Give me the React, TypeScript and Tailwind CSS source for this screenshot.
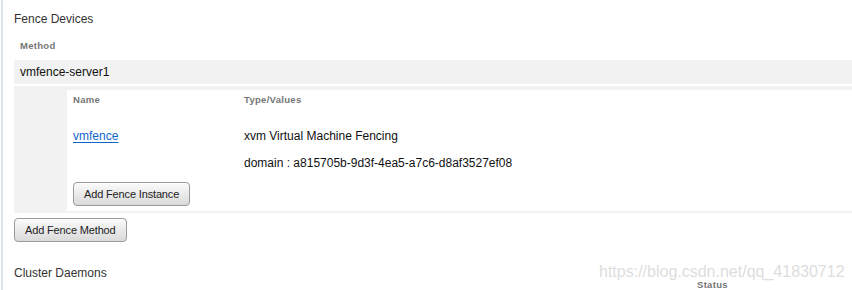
import React from 'react';

const font = { fontFamily: '"Liberation Sans", Arial, sans-serif' };

function GrayButton({ label }: { label: string }) {
  return (
    <button
      className="h-6 px-[10px] rounded-[4px] border border-[#9a9a9a] bg-gradient-to-b from-[#fbfbfb] to-[#dadada] text-[11px] leading-none text-[#222] tracking-[-0.15px] shadow-[inset_0_1px_0_#fff]"
    >
      {label}
    </button>
  );
}

function ColHead({ children }: { children: React.ReactNode }) {
  return <span className="text-[9.5px] leading-none font-bold text-[#767676] tracking-[0.3px]">{children}</span>;
}

export default function App() {
  return (
    <div className="w-[852px] h-[290px] bg-white overflow-hidden relative" style={font}>
      <div className="ml-px h-full border-l-2 border-[#dde3e9] pl-[11px] flex flex-col">
        <h2 className="mt-3 h-[14px] flex items-center text-[12px] leading-none text-[#333]">Fence Devices</h2>

        <div className="mt-[13px] h-[14px] flex items-center pl-[6px]">
          <ColHead>Method</ColHead>
        </div>

        <div className="mt-[7px] h-6 bg-[#f2f2f2] flex items-center px-[6px] text-[12px] leading-none text-[#111]">
          vmfence-server1
        </div>

        <div className="mt-[2px] bg-[#f2f2f2] pl-[53px] pt-[4px] pb-[2px]">
          <div className="bg-white h-[121px] pl-[6px] flex flex-col">
            <div className="mt-[3px] h-[14px] flex items-center">
              <div className="w-[171px] flex items-center">
                <ColHead>Name</ColHead>
              </div>
              <ColHead>Type/Values</ColHead>
            </div>
            <div className="mt-[22px] h-[14px] flex items-center text-[12px] leading-none">
              <div className="w-[171px]">
                <a href="#" className="text-[#1166cc] underline underline-offset-2">
                  vmfence
                </a>
              </div>
              <span className="text-[#111]">xvm Virtual Machine Fencing</span>
            </div>
            <div className="mt-[13px] h-[14px] flex items-center text-[12px] leading-none">
              <span className="w-[171px]" />
              <span className="text-[#111]">domain : a815705b-9d3f-4ea5-a7c6-d8af3527ef08</span>
            </div>
            <div className="mt-[12px] flex">
              <GrayButton label="Add Fence Instance" />
            </div>
          </div>
        </div>

        <div className="mt-[5px] flex">
          <GrayButton label="Add Fence Method" />
        </div>

        <h2 className="mt-[24px] h-[14px] flex items-center text-[12px] leading-none text-[#333]">Cluster Daemons</h2>
        <div className="h-[10px] flex items-center pl-[683px]">
          <ColHead>Status</ColHead>
        </div>
      </div>

      <span className="absolute left-[599px] top-[262px] text-[16px] leading-[20px] text-[#d4d4d4]/80 pointer-events-none">
        https://blog.csdn.net/qq_41830712
      </span>
    </div>
  );
}
